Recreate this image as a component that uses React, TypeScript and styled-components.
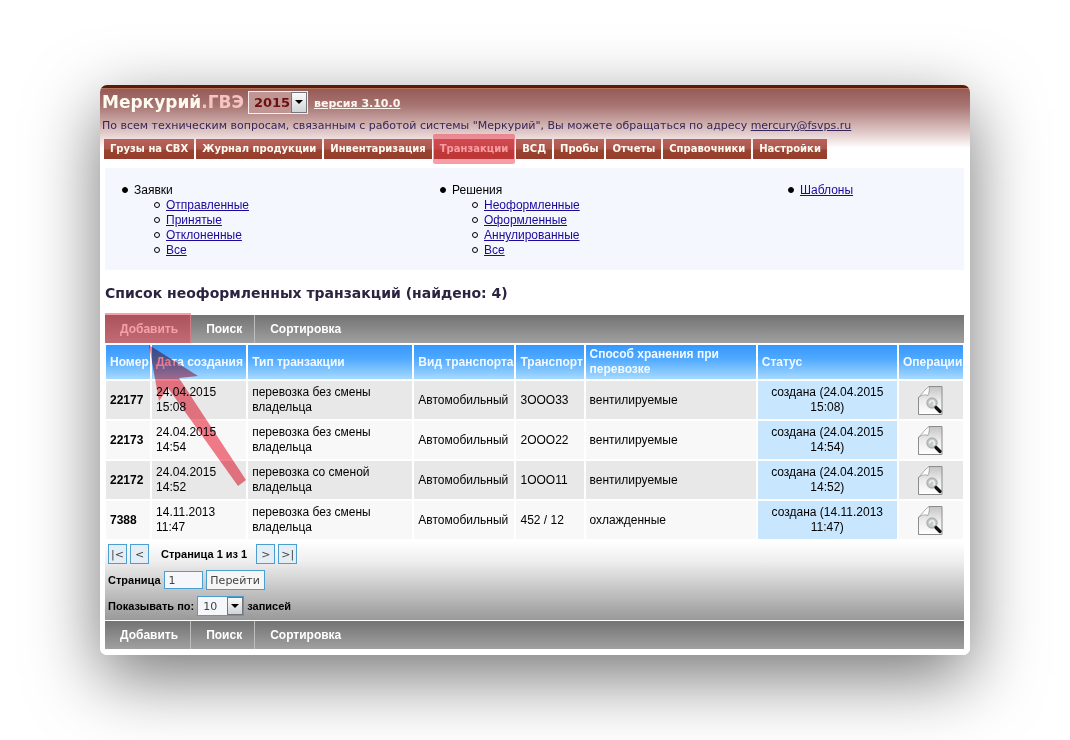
import React from "react";
import styled, { createGlobalStyle, css } from "styled-components";

const verdana = `Verdana, "DejaVu Sans", sans-serif`;
const arial = `Arial, "Liberation Sans", sans-serif`;

const GlobalStyle = createGlobalStyle`
  *, *::before, *::after { box-sizing: border-box; }
  body {
    margin: 0;
    background: #fff;
    color: #000;
    font: 12px/15px ${arial};
  }
  button, input, select { font: inherit; margin: 0; }
`;

const Page = styled.main`
  padding: 85px 100px;
`;

const Panel = styled.div`
  border-radius: 7px;
  background: #fff;
  overflow: hidden;
  padding-bottom: 6px;
`;

const Shadow = styled.div`
  border-radius: 7px;
  box-shadow: 0 22px 70px rgba(0, 0, 0, 0.54);
`;

const Header = styled.header`
  height: 83px;
  padding: 2px 2px 0;
  border-top: 3px solid #5c1a08;
  background: linear-gradient(#c98a5c 0, #975a57 1px, #a87673 18px, #dfc8c7 44px, #fff 60px);
  font-family: ${verdana};
`;

const TitleRow = styled.div`
  display: flex;
  align-items: center;
  height: 24px;
`;

const Brand = styled.h1`
  margin: 0 4px 0 0;
  font-size: 17px;
  line-height: 20px;
  color: #fffaf0;
  span { color: #f6c3c3; }
`;

const SelectBox = styled.span<{ $large?: boolean }>`
  display: inline-flex;
  position: relative;
  border: 1px solid ${(p) => (p.$large ? "#f7eeee" : "#4a9fd0")};
  select {
    appearance: none;
    border: 0;
    border-radius: 0;
    padding: 0 0 0 5px;
    font-family: ${verdana};
    outline: none;
    ${(p) =>
      p.$large
        ? css`
            width: 58px;
            height: 21px;
            font-size: 13px;
            font-weight: bold;
            color: #6b0f0f;
            background: #c09694;
          `
        : css`
            width: 45px;
            height: 18px;
            font-size: 11px;
            font-weight: normal;
            color: #444;
            background: #f5f7fa;
          `}
  }
`;

const ArrowBox = styled.span`
  position: absolute;
  top: 0;
  right: 0;
  bottom: 0;
  width: 16px;
  display: flex;
  align-items: center;
  justify-content: center;
  border: 1px solid #70777f;
  background: linear-gradient(#fafafa, #d2d5d8);
  pointer-events: none;
`;

const Version = styled.a`
  margin-left: 6px;
  padding-top: 2px;
  font-size: 11px;
  font-weight: bold;
  color: #fff6f0;
`;

const Support = styled.p`
  margin: 4px 0 6px;
  font-size: 11px;
  line-height: 15px;
  color: #37265a;
  a { color: #37265a; }
`;

const Tabs = styled.nav`
  display: flex;
  gap: 2px;
  padding-left: 2px;
`;

const highlight = css`
  position: relative;
  &::after {
    content: "";
    position: absolute;
    background: rgba(238, 45, 68, 0.46);
    pointer-events: none;
  }
`;

const Tab = styled.a<{ $marked?: boolean }>`
  height: 20px;
  padding: 0 6px;
  font-size: 10px;
  line-height: 19px;
  font-weight: bold;
  white-space: nowrap;
  text-decoration: none;
  color: #fffaf2;
  background: linear-gradient(#b8625a 0, #ac564c 10px, #99442f 11px, #953d2e);
  ${(p) =>
    p.$marked &&
    css`
      ${highlight}
      &::after {
        inset: -5px -1px;
        border-radius: 2px;
      }
    `}
`;

const Content = styled.div`
  padding: 0 6px 0 5px;
`;

const Menu = styled.section`
  display: grid;
  grid-template-columns: 318fr 348fr 193fr;
  height: 102px;
  padding-top: 15px;
  background: #f5f7ff;
  ul {
    margin: 0;
    padding-left: 32px;
    list-style: none;
  }
  > ul { padding-left: 29px; }
  li::before {
    content: "";
    display: inline-block;
    width: 6px;
    height: 6px;
    margin: 0 6px 1px -12px;
    border: 1px solid #000;
    border-radius: 50%;
    background: #000;
  }
  li li::before { background: none; }
  a { color: #1a0a9c; }
`;

const Heading = styled.h2`
  margin: 14px 0 13px;
  font: bold 14px/18px ${verdana};
  color: #2b2340;
`;

const Toolbar = styled.div`
  display: flex;
  height: 28px;
  background: linear-gradient(#737373, #a0a0a0);
`;

const ToolButton = styled.button<{ $marked?: boolean }>`
  padding: 0 12px 0 15px;
  border: 0;
  border-right: 1px solid #bdbdbd;
  background: none;
  color: #fff;
  font-weight: bold;
  &:last-child { border-right: 0; }
  ${(p) =>
    p.$marked &&
    css`
      ${highlight}
      &::after {
        inset: -2px -1px 0 0;
      }
    `}
`;

const TableWrap = styled.div`
  position: relative;
  margin: 0 -1px;
`;

const Pointer = styled.svg`
  position: absolute;
  left: 45px;
  top: 2px;
  mix-blend-mode: multiply;
  pointer-events: none;
`;

const Table = styled.table`
  width: 100%;
  table-layout: fixed;
  border-spacing: 2px;
  th, td { padding: 4px; text-align: left; }
  thead th {
    height: 34px;
    padding: 2px 0 2px 4px;
    color: #f2faff;
    white-space: nowrap;
    background: linear-gradient(#3497fb, #4fa9ff 40%, #a6d9ff);
  }
`;

const HeadCell = styled.th<{ $wrap?: boolean }>`
  && { white-space: ${(p) => (p.$wrap ? "normal" : "nowrap")}; }
`;

const Row = styled.tr`
  height: 38px;
  background: #f8f8f8;
  &:nth-child(odd) { background: #e8e8e8; }
`;

const StatusCell = styled.td`
  && { text-align: center; }
  background: #c8e7ff;
`;

const ActionCell = styled.td`
  && { padding: 0; text-align: center; }
`;

const IconButton = styled.button`
  display: block;
  width: 100%;
  padding: 0;
  border: 0;
  background: none;
  svg { display: block; margin: 0 auto; }
`;

const Pager = styled.div`
  display: flex;
  flex-direction: column;
  gap: 6px;
  height: 80px;
  padding: 3px;
  border-bottom: 1px solid #fff;
  font-size: 11px;
  font-weight: bold;
  background: linear-gradient(#fff, #efefef 25%, #999);
`;

const PagerLine = styled.div`
  display: flex;
  align-items: center;
  gap: 3px;
  height: 20px;
`;

const PageLabel = styled.span`
  padding: 0 6px 0 9px;
`;

const PagerButton = styled.button<{ $wide?: boolean }>`
  width: ${(p) => (p.$wide ? 59 : 19)}px;
  height: 20px;
  padding: 0;
  border: 1px solid #4a9fd0;
  background: ${(p) => (p.$wide ? "#f6f6f6" : "#e6eef5")};
  color: #444;
  font: 11px/15px ${verdana};
  white-space: nowrap;
`;

const PageInput = styled.input`
  width: 39px;
  height: 18px;
  padding: 0 4px;
  border: 1px solid #4a9fd0;
  background: #f5f7fa;
  color: #444;
  font: 11px/15px ${verdana};
`;

function DropArrow() {
  return (
    <ArrowBox>
      <svg width="8" height="4" viewBox="0 0 8 4" aria-hidden="true">
        <path d="M0 0h8L4 4z" fill="#000" />
      </svg>
    </ArrowBox>
  );
}

function DocumentIcon() {
  return (
    <svg width="25" height="29" viewBox="0 0 25 29" aria-hidden="true">
      <defs>
        <linearGradient id="sheet" x1="0" y1="0" x2="0" y2="1">
          <stop offset="0" stopColor="#c4c4c4" />
          <stop offset="0.5" stopColor="#ececec" />
          <stop offset="1" stopColor="#fff" />
        </linearGradient>
      </defs>
      <path d="M11 .5h13v28H.5V11C5 9 9 6 11 .5z" fill="url(#sheet)" />
      <path d="M11 .5h13v28H.5V11" fill="none" stroke="#8c8c8c" />
      <path d="M11 .5c1 3 0 6-1 9-3-1-6-1-9.500 2C4 8 7 3 11 .5z" fill="#fcfcfc" stroke="#8a8a8a" strokeWidth=".7" />
      <circle cx="14" cy="17" r="5" fill="#c6cacb" stroke="#b0b3b4" strokeWidth="1.500" />
      <path d="M12 17.500a2.200 2.200 0 1 1 3 1.500" fill="none" stroke="#f0f0f0" strokeWidth="1.500" />
      <path d="M18 21.500l4 4" stroke="#111" strokeWidth="3.200" strokeLinecap="round" />
    </svg>
  );
}

const tabs = ["Грузы на СВХ", "Журнал продукции", "Инвентаризация", "Транзакции", "ВСД", "Пробы", "Отчеты", "Справочники", "Настройки"];

const menu = [
  { title: "Заявки", items: ["Отправленные", "Принятые", "Отклоненные", "Все"] },
  { title: "Решения", items: ["Неоформленные", "Оформленные", "Аннулированные", "Все"] },
];

const columns = [
  { title: "Номер", width: 44 },
  { title: "Дата создания", width: 94 },
  { title: "Тип транзакции", width: 164 },
  { title: "Вид транспорта", width: 100 },
  { title: "Транспорт", width: 67 },
  { title: "Способ хранения при перевозке", width: 170 },
  { title: "Статус", width: 139 },
  { title: "Операции", width: 64 },
];
const totalWidth = columns.reduce((sum, c) => sum + c.width, 0);

const rows = [
  { id: "22177", date: "24.04.2015", time: "15:08", type: "перевозка без смены владельца", vehicle: "3ООО33", storage: "вентилируемые" },
  { id: "22173", date: "24.04.2015", time: "14:54", type: "перевозка без смены владельца", vehicle: "2ООО22", storage: "вентилируемые" },
  { id: "22172", date: "24.04.2015", time: "14:52", type: "перевозка со сменой владельца", vehicle: "1ООО11", storage: "вентилируемые" },
  { id: "7388", date: "14.11.2013", time: "11:47", type: "перевозка без смены владельца", vehicle: "452 / 12", storage: "охлажденные" },
];

function Actions({ marked }: { marked?: boolean }) {
  return (
    <Toolbar>
      <ToolButton $marked={marked}>Добавить</ToolButton>
      <ToolButton>Поиск</ToolButton>
      <ToolButton>Сортировка</ToolButton>
    </Toolbar>
  );
}

export default function App() {
  return (
    <Page>
      <GlobalStyle />
      <Shadow>
        <Panel>
          <Header>
            <TitleRow>
              <Brand>Меркурий<span>.ГВЭ</span></Brand>
              <SelectBox $large>
                <select aria-label="Год" defaultValue="2015">
                  <option>2015</option>
                  <option>2014</option>
                </select>
                <DropArrow />
              </SelectBox>
              <Version href="#version">версия 3.10.0</Version>
            </TitleRow>
            <Support>
              По всем техническим вопросам, связанным с работой системы "Меркурий", Вы можете обращаться по адресу{" "}
              <a href="mailto:mercury@fsvps.ru">mercury@fsvps.ru</a>
            </Support>
            <Tabs>
              {tabs.map((name) => (
                <Tab key={name} href="#" $marked={name === "Транзакции"}>{name}</Tab>
              ))}
            </Tabs>
          </Header>
          <Content>
            <Menu>
              {menu.map((group) => (
                <ul key={group.title}>
                  <li>
                    {group.title}
                    <ul>
                      {group.items.map((item) => (
                        <li key={item}><a href="#">{item}</a></li>
                      ))}
                    </ul>
                  </li>
                </ul>
              ))}
              <ul>
                <li><a href="#">Шаблоны</a></li>
              </ul>
            </Menu>
            <Heading>Список неоформленных транзакций (найдено: 4)</Heading>
            <Actions marked />
            <TableWrap>
              <Table>
                <colgroup>
                  {columns.map((c) => (
                    <col key={c.title} style={{ width: `${(c.width / totalWidth) * 100}%` }} />
                  ))}
                </colgroup>
                <thead>
                  <tr>
                    {columns.map((c) => (
                      <HeadCell key={c.title} scope="col" $wrap={c.title.startsWith("Способ")}>{c.title}</HeadCell>
                    ))}
                  </tr>
                </thead>
                <tbody>
                  {rows.map((r) => (
                    <Row key={r.id}>
                      <th scope="row">{r.id}</th>
                      <td>{r.date}<br />{r.time}</td>
                      <td>{r.type}</td>
                      <td>Автомобильный</td>
                      <td>{r.vehicle}</td>
                      <td>{r.storage}</td>
                      <StatusCell>создана ({r.date} {r.time})</StatusCell>
                      <ActionCell>
                        <IconButton aria-label="Просмотр"><DocumentIcon /></IconButton>
                      </ActionCell>
                    </Row>
                  ))}
                </tbody>
              </Table>
              <Pointer width="100" height="142" viewBox="0 0 100 142" aria-hidden="true">
                <path d="M0 0L49 31L30 33L97 135L89 141L19 43L10 56z" fill="#f57c8b" />
              </Pointer>
            </TableWrap>
            <Pager>
              <PagerLine>
                <PagerButton>|&lt;</PagerButton>
                <PagerButton>&lt;</PagerButton>
                <PageLabel>Страница 1 из 1</PageLabel>
                <PagerButton>&gt;</PagerButton>
                <PagerButton>&gt;|</PagerButton>
              </PagerLine>
              <PagerLine>
                <label htmlFor="page">Страница</label>
                <PageInput id="page" defaultValue="1" />
                <PagerButton $wide>Перейти</PagerButton>
              </PagerLine>
              <PagerLine>
                <label htmlFor="size">Показывать по:</label>
                <SelectBox>
                  <select id="size" defaultValue="10">
                    <option>10</option>
                    <option>20</option>
                  </select>
                  <DropArrow />
                </SelectBox>
                <span>записей</span>
              </PagerLine>
            </Pager>
            <Actions />
          </Content>
        </Panel>
      </Shadow>
    </Page>
  );
}
